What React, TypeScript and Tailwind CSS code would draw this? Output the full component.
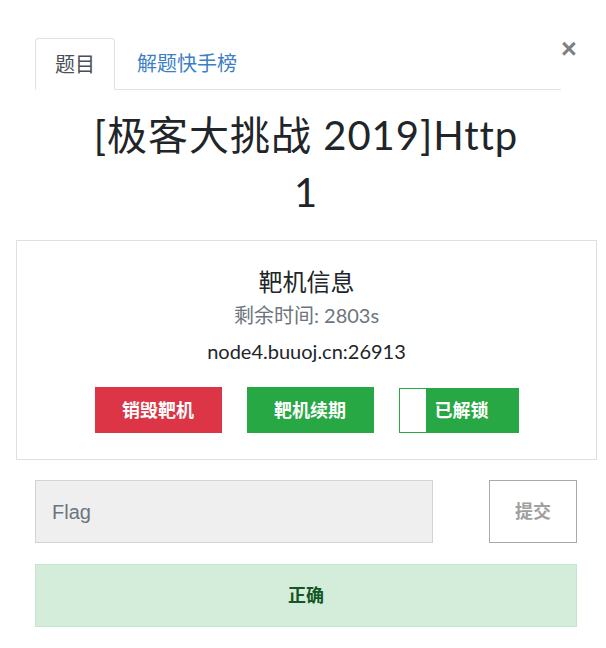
const cjk = "font-['Lato','Noto_Sans_CJK_SC',sans-serif]";

export default function App() {
  return (
    <div className={`relative h-[648px] w-[606px] bg-white pl-[35px] pr-[29px] pt-[38px] text-[#212529] ${cjk}`}>
      <button className="absolute left-[561px] top-[36px] font-['Liberation_Sans',sans-serif] text-[27px] font-bold leading-none text-[#808080]">
        ×
      </button>

      <ul className="mr-[16px] flex border-b border-[#dee2e6]">
        <li className="-mb-px rounded-t-[4px] border border-[#dee2e6] border-b-white bg-white px-[19px] py-[10px] text-[20px] leading-[30px] text-[#495057]">
          题目
        </li>
        <li className="ml-[2px] px-[20px] py-[10px] text-[20px] leading-[30px] text-[#3b80c6]">解题快手榜</li>
      </ul>

      <h1 className="mt-[17px] text-center text-[40px] font-normal leading-[57px] tracking-[1px]">
        [极客大挑战 2019]Http
        <br />1
      </h1>

      <div className="-ml-[19px] -mr-[20px] mt-[19px] h-[220px] border border-[#dfdfdf] pt-[26px] text-center">
        <h4 className="text-[24px] leading-[29px]">靶机信息</h4>
        <p className="mt-[4px] text-[20px] leading-[30px] text-[#6c757d]">剩余时间: 2803s</p>
        <p className="mt-[7px] text-[20px] leading-[28px]">node4.buuoj.cn:26913</p>
        <div className="mt-[22px] flex justify-center gap-[25px]">
          <button className="h-[46px] w-[127px] bg-[#dc3545] text-[18px] font-bold text-white">销毁靶机</button>
          <button className="h-[46px] w-[127px] bg-[#28a745] text-[18px] font-bold text-white">靶机续期</button>
          <button className="relative mt-px h-[45px] w-[120px] border border-[#28a745] bg-[#28a745] text-[18px] font-bold text-white">
            <span className="absolute bottom-0 left-0 top-0 w-[26px] bg-white" />
            <span className="relative pl-[6px]">已解锁</span>
          </button>
        </div>
      </div>

      <div className="mt-[20px] flex justify-between">
        <div className="flex h-[63px] w-[398px] items-center border border-[#ced4da] bg-[#efefef] px-[16px] font-['Liberation_Sans',sans-serif] text-[20px] text-[#6c757d]">
          Flag
        </div>
        <button className="h-[63px] w-[88px] border border-[#a9a9a9] bg-white text-[18px] font-bold text-[#a0a0a0]">
          提交
        </button>
      </div>

      <div className="mt-[21px] flex h-[63px] items-center justify-center border border-[#c3e6cb] bg-[#d4edda] text-[18px] font-bold text-[#155724]">
        正确
      </div>
    </div>
  );
}
